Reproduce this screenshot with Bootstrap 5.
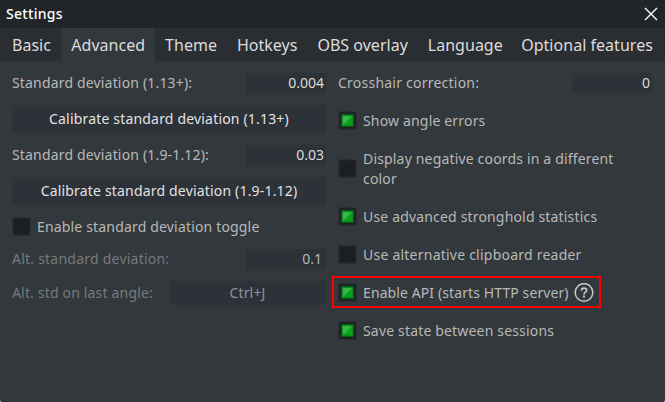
<!DOCTYPE html>
<html lang="en">
<head>
<meta charset="utf-8">
<title>Settings</title>
<link href="https://cdn.jsdelivr.net/npm/bootstrap@5.3.0/dist/css/bootstrap.min.css" rel="stylesheet">
<style>
html{background:#fff}
body{margin:0;background:#fff;font-family:"Noto Sans",sans-serif;font-size:14px;line-height:20px;overflow:hidden}
.window{width:665px;height:402px;background:#33383c;color:#b8b8b8;border-radius:2px;border-bottom:1px solid #303338}
.titlebar{height:28px;background:#212529;color:#fff;padding:0 7px 0 6px;font-weight:500;letter-spacing:.3px}
.tabs{height:33px;background:#2a2d32;font-size:16px;flex-wrap:nowrap}
.tabs .nav-link{padding:2px 10px 0;line-height:31px;color:#dcdcdc;white-space:nowrap;letter-spacing:.015px}
.tabs .nav-link.first{padding-left:12px;padding-right:10.4px}
.tabs .nav-link.wide{padding-left:8.4px;letter-spacing:.03px}
.tabs .nav-link.active{background:#33383c}
.panel{padding:12px 13px 0 12px}
.left{width:314px;gap:12px;letter-spacing:.17px}
.right{width:314px;gap:18px;letter-spacing:.17px}
.loose{letter-spacing:.23px}
.snug{letter-spacing:.1px;white-space:nowrap}
.field{width:80px;height:20px;padding:0 2px;border:0;border-radius:0;background:#2d3138;color:#dcdcdc;text-align:right;line-height:20px;letter-spacing:0}
.field.dim{color:#b4b7bb;padding-right:4px}
.action{height:28px;padding:0;border:0;border-radius:0;background:#2d3138;color:#e2e2e2;font-size:14px;line-height:28px;letter-spacing:.18px}
.action:hover{background:#343943;color:#fff}
.hotkey{width:157px;height:24px;line-height:24px;color:#929599}
.dimtext{color:#777a7c}
.check{gap:6px}
.wrapped{max-width:270px}
.box{width:19px;height:19px;margin-bottom:1px;flex:none;display:block}
.marked{width:269px;height:32px;margin:-7px 0 -5px -6px;padding:2px 4px 0;border:2px solid #f00}
.help{margin-left:-.5px}
</style>
</head>
<body>
<svg width="0" height="0" class="position-absolute" aria-hidden="true">
<symbol id="off" viewBox="0 0 19 19"><rect width="19" height="19" rx="1.5" fill="#2b2f33"/><rect x="1" y="1" width="17" height="17" rx="1" fill="#212529"/><rect x="2" y="2" width="15" height="15" fill="#1b1f22"/></symbol>
<symbol id="on" viewBox="0 0 19 19"><rect width="19" height="19" rx="1.5" fill="#2b2f33"/><rect x="1" y="1" width="17" height="17" rx="1" fill="#212529"/><rect x="2" y="2" width="15" height="15" fill="#1e2025"/><rect x="3" y="3" width="13" height="13" rx="1.5" fill="#06600f"/><rect x="4" y="4" width="11" height="11" fill="#078a17"/><rect x="5" y="5" width="9" height="9" fill="#06a31b"/><path d="M5 5h9L5 14z" fill="#3bb54a"/></symbol>
</svg>
<main class="window">
<header class="titlebar d-flex align-items-center justify-content-between"><span>Settings</span>
<svg width="14" height="14" viewBox="0 0 14 14" aria-label="Close"><path d="M1 1L13 13M13 1L1 13" stroke="#fff" stroke-width="1.4"/></svg></header>
<nav class="nav tabs">
<a class="nav-link first">Basic</a><a class="nav-link active">Advanced</a><a class="nav-link">Theme</a><a class="nav-link">Hotkeys</a><a class="nav-link">OBS overlay</a><a class="nav-link">Language</a><a class="nav-link wide">Optional features</a>
</nav>
<section class="panel d-flex justify-content-between align-items-start">
<div class="left d-flex flex-column">
<div class="d-flex justify-content-between"><span>Standard deviation (1.13+):</span><div class="field">0.004</div></div>
<button class="btn action loose">Calibrate standard deviation (1.13+)</button>
<div class="d-flex justify-content-between"><span>Standard deviation (1.9-1.12):</span><div class="field">0.03</div></div>
<button class="btn action">Calibrate standard deviation (1.9-1.12)</button>
<div class="check d-flex"><svg class="box"><use href="#off"/></svg><span>Enable standard deviation toggle</span></div>
<div class="d-flex justify-content-between"><span class="dimtext loose">Alt. standard deviation:</span><div class="field dim">0.1</div></div>
<div class="d-flex justify-content-between align-items-center"><span class="dimtext">Alt. std on last angle:</span><button class="btn action hotkey">Ctrl+J</button></div>
</div>
<div class="right d-flex flex-column">
<div class="d-flex justify-content-between"><span class="loose">Crosshair correction:</span><div class="field">0</div></div>
<div class="check d-flex"><svg class="box"><use href="#on"/></svg><span>Show angle errors</span></div>
<div class="check d-flex align-items-center"><svg class="box"><use href="#off"/></svg><span class="wrapped">Display negative coords in a different color</span></div>
<div class="check d-flex"><svg class="box"><use href="#on"/></svg><span>Use advanced stronghold statistics</span></div>
<div class="check d-flex"><svg class="box"><use href="#off"/></svg><span class="loose">Use alternative clipboard reader</span></div>
<div class="marked check d-flex align-items-center"><svg class="box"><use href="#on"/></svg><span class="snug">Enable API (starts HTTP server)</span>
<svg width="20" height="20" viewBox="0 .5 20 20" class="help flex-shrink-0" fill="none" stroke="#c8c8c8"><circle cx="10" cy="10" r="8.8" stroke-width="1.5"/><path d="M7.4 8.1C7.4 6.5 8.5 5.6 10 5.6S12.6 6.5 12.6 7.9C12.6 9.6 10 9.8 10 11.9" stroke-width="1.7"/><path d="M10 13.1v1.9" stroke-width="1.9"/></svg></div>
<div class="check d-flex"><svg class="box"><use href="#on"/></svg><span>Save state between sessions</span></div>
</div>
</section>
</main>
<script src="https://cdn.jsdelivr.net/npm/bootstrap@5.3.0/dist/js/bootstrap.bundle.min.js"></script>
</body>
</html>
